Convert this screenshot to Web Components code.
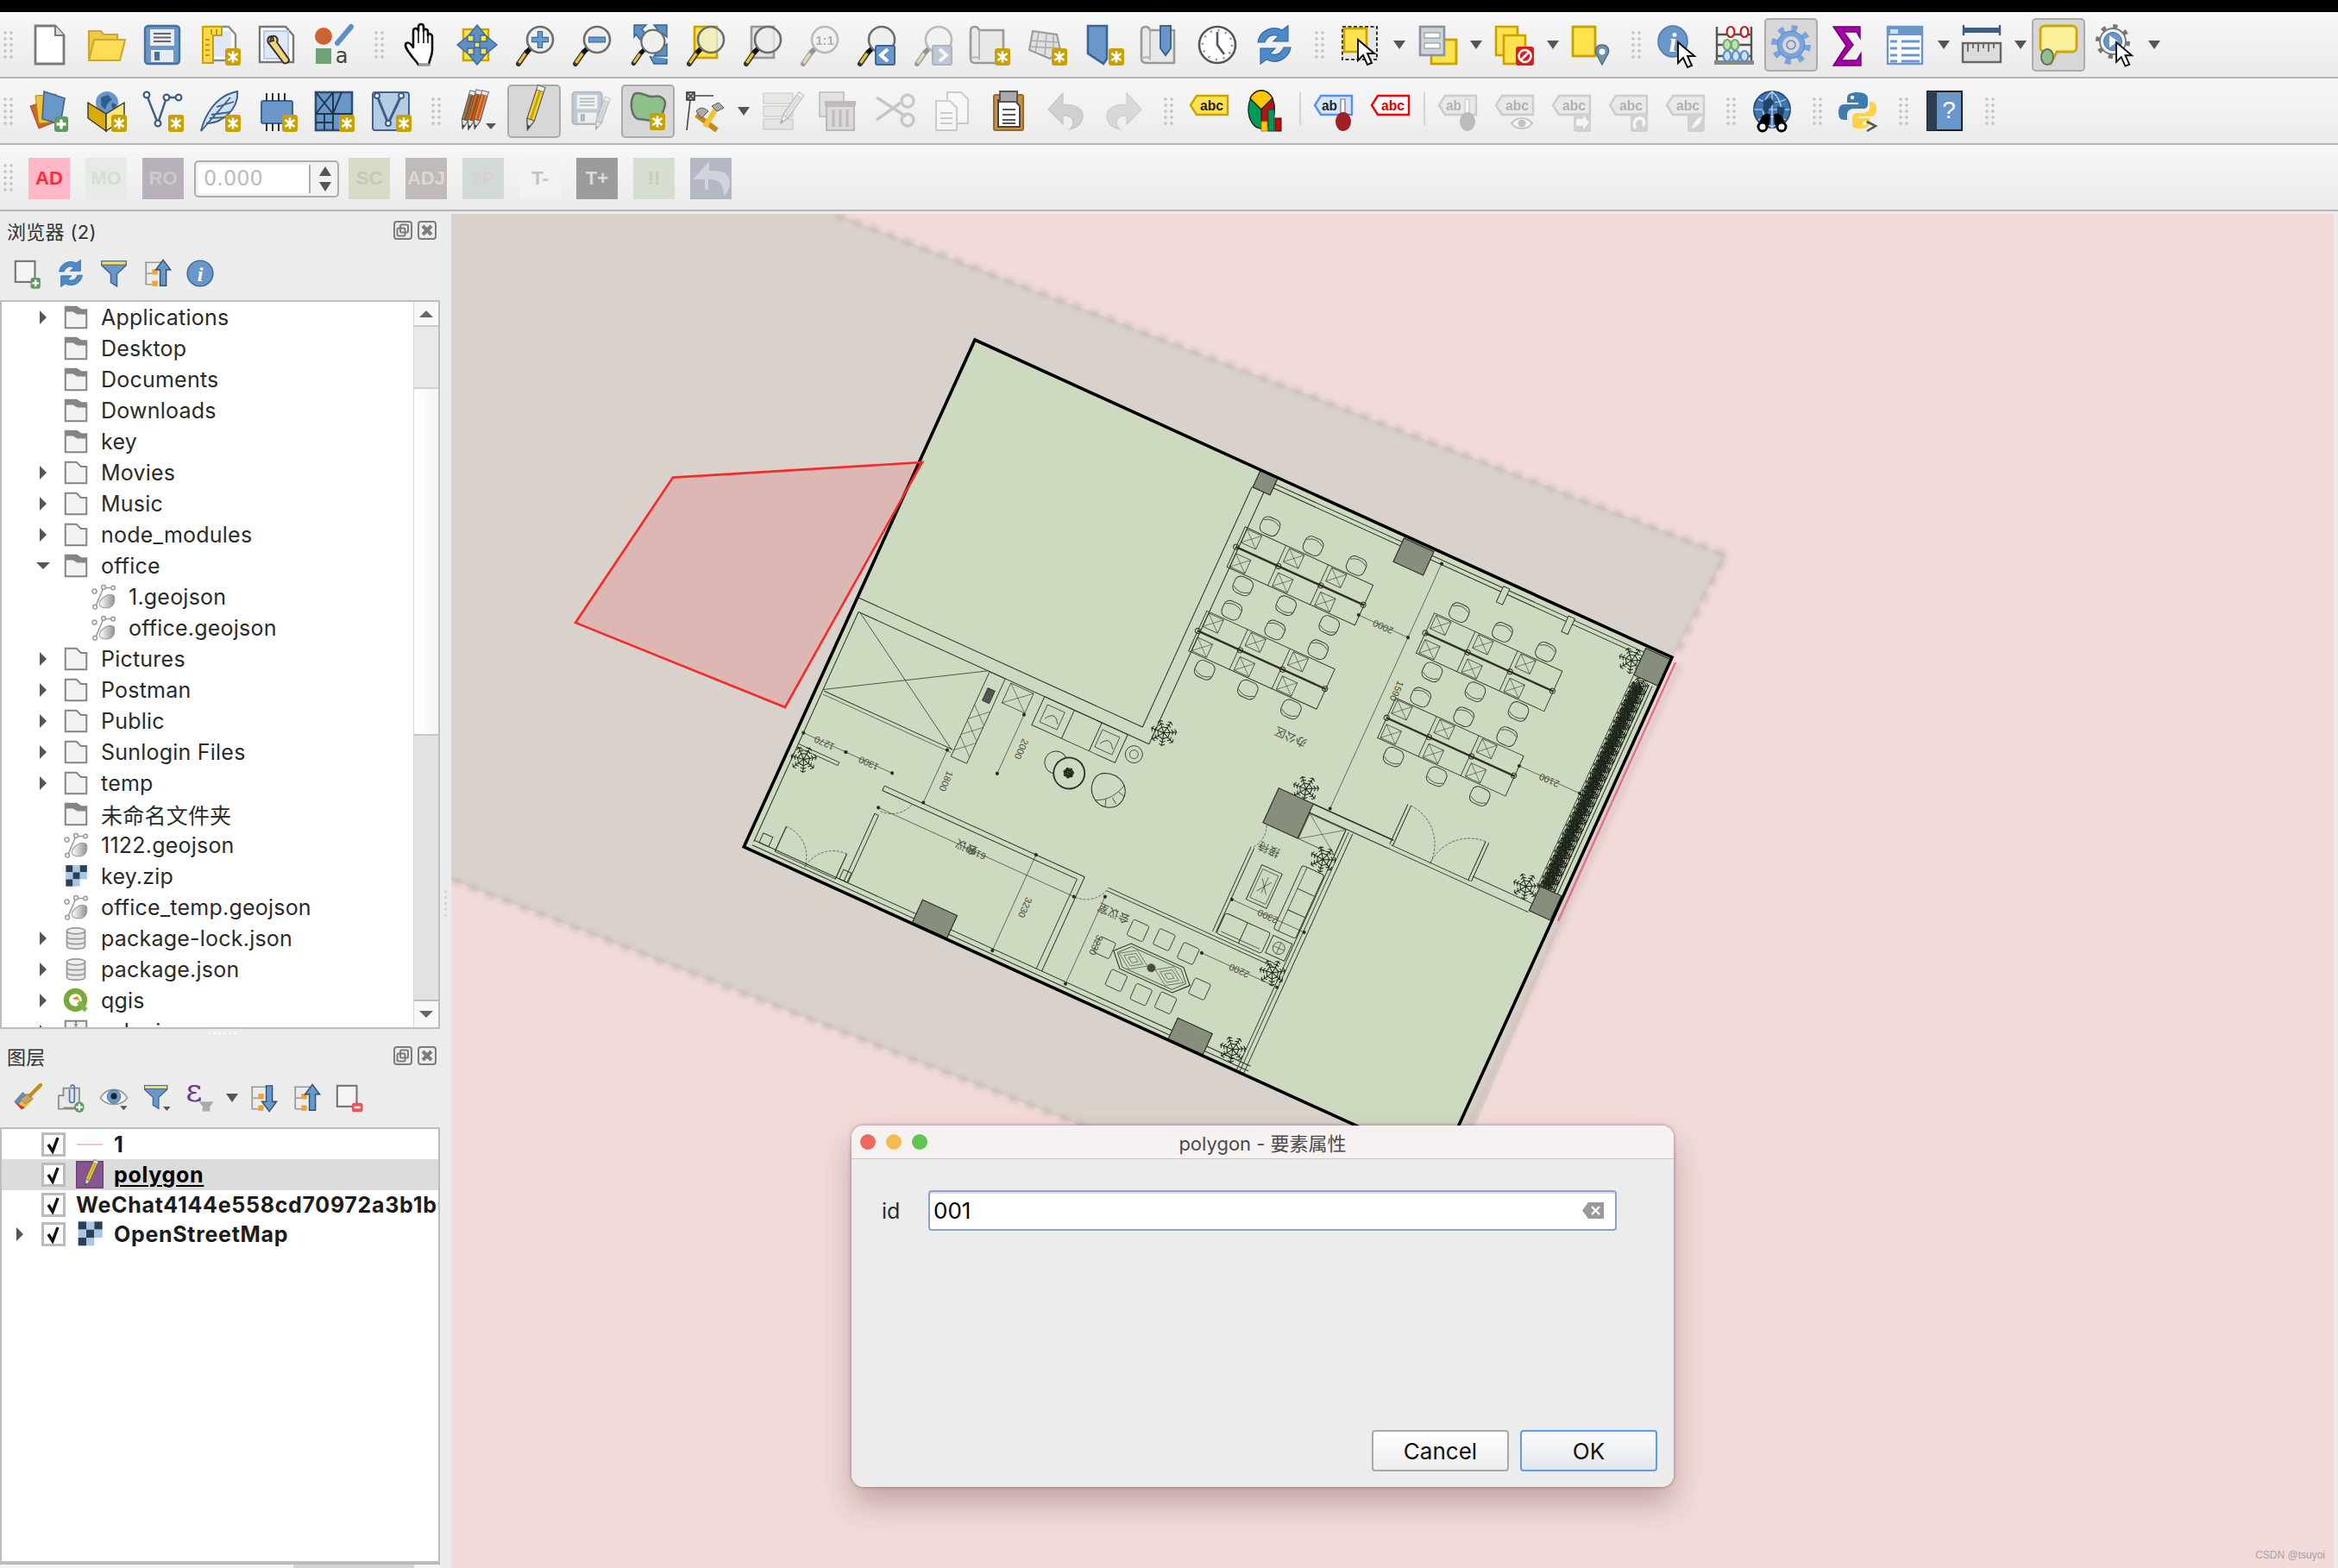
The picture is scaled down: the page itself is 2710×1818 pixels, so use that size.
<!DOCTYPE html>
<html lang="zh">
<head>
<meta charset="utf-8">
<title>QGIS</title>
<style>
	html, body { margin: 0; padding: 0; background: #ececec; }
	body { width: 2710px; height: 1818px; overflow: hidden; font-family: Inter, "Noto Sans CJK SC", sans-serif; color: #222; }
</style>
</head>
<body>
<qgis-app></qgis-app>

<script>
// Icon library. Every icon is drawn in a 48x48 box.
const star = (x = 30, y = 28) => `<g transform="translate(${x} ${y})"><rect width="18" height="20" rx="3" fill="#c9a200"/><path d="M9 3.5v13M3.5 6l11 8M14.5 6l-11 8" stroke="#fff" stroke-width="2.6"/></g>`;
const plus = (x, y, r = 3) => `<g transform="translate(${x} ${y})"><rect width="16" height="18" rx="${r}" fill="#5f9a5f"/><path d="M8 3.5v11M2.5 9h11" stroke="#fff" stroke-width="3.4"/></g>`;
const lens = (fill = '#eef0ee') => `<path d="M6 46 15 33" stroke="#333" stroke-width="6" stroke-linecap="round"/><path d="M6.5 45 14 34" stroke="#f0c02c" stroke-width="3.2"/><path d="M18 26l4 4-5 5-4-4z" fill="#111"/><circle cx="31" cy="18" r="15" fill="${fill}" stroke="#6e6e6e" stroke-width="2.6"/>`;
const cursor = (x, y, s = 1) => `<path transform="translate(${x} ${y}) scale(${s})" d="M0 0v24l6-6 5 11 5-2-5-11h8z" fill="#fff" stroke="#111" stroke-width="2"/>`;
const label = (fill, stroke, txt, col = '#222', y = 6) => `<path d="M9 ${y}h36v22H9L2 ${y + 11}z" fill="${fill}" stroke="${stroke}" stroke-width="2.4"/><text x="${txt.length < 3 ? 10 : 13}" y="${y + 17}" font-family="Liberation Sans" font-weight="700" font-size="17" textLength="${txt.length * 9}" lengthAdjust="spacingAndGlyphs" fill="${col}">${txt}</text>`;
const scroll = `<path d="M7 3C3 3 2 5 2 8v32c0 3 2 5 5 5h33V7H12C11 4 10 3 7 3z" fill="#e8e8e8" stroke="#9a9a9a" stroke-width="2.6"/><path d="M12 7v33c-2-2-6-2-10 0" fill="none" stroke="#b4b4b4" stroke-width="2"/>`;
const pencil = (x, y, r, c1, c2, s = 1) => `<g transform="translate(${x} ${y}) rotate(${r}) scale(${s})"><path d="M-5-32H5V14L0 28-5 14z" fill="${c1}" stroke="#555" stroke-width="1.4"/><path d="M0-32V14" stroke="${c2}" stroke-width="3.4"/><path d="M-5 14H5L0 28z" fill="#ddd" stroke="#555" stroke-width="1.2"/><path d="M-2 22H2L0 28z" fill="#444"/><path d="M-5-32H5V-26H-5z" fill="#eee" stroke="#777"/></g>`;
const floppy = `<rect x="3" y="2" width="40" height="44" rx="4" fill="#6a97c9" stroke="#46709f" stroke-width="2.4"/><rect x="9" y="6" width="28" height="19" fill="#e8ecf0"/><path d="M13 11h20M13 15.5h20M13 20h20" stroke="#666" stroke-width="2"/><rect x="10" y="30" width="26" height="14" fill="#e8ecf0"/><rect x="14" y="32" width="6" height="10" fill="#46709f"/>`;
const blueArrows = `<g fill="#5c8fc4" stroke="#3a6a9c" stroke-width="1.4"><path d="M24 1l10 12h-6v8h-8v-8h-6z"/><path d="M24 47L14 35h6v-8h8v8h6z"/><path d="M1 24l12-10v6h8v8h-8v6z"/><path d="M47 24L35 34v-6h-8v-8h8v-6z"/></g>`;
const refresh = `<g fill="#4f8ac8" stroke="#2f69a6" stroke-width="1.2"><path d="M5 21C7 8 21 1 33 7l7-5v18H23l6-6c-6-3-13-1-16 7z"/><path d="M43 27C41 40 27 47 15 41l-7 5V28h17l-6 6c6 3 13 1 16-7z"/></g>`;
const funnel = `<path d="M4 4h40v7L29 25v20l-10-6V25L4 11z" fill="#6a97c9" stroke="#3d6590" stroke-width="2"/><path d="M4 4h40v6H4z" fill="#ffe04a" stroke="#3d6590" stroke-width="1.4"/>`;
const orgTree = `<path d="M4 6h30M6 6v36h10M6 24h10" stroke="#999" stroke-width="2.4" fill="none"/><rect x="16" y="17" width="9" height="9" fill="#f2a32b"/><rect x="16" y="36" width="9" height="9" fill="#f2a32b"/>`;
const drop = (x = 36, y = 38) => `<path d="M${x} ${y}h12l-6 7z" fill="#555"/>`;
const globe = `<circle cx="24" cy="22" r="21" fill="#3f76ad" stroke="#294f78" stroke-width="2"/><path d="M24 1v42M3 22h42M8 10c10 5 22 5 32 0M8 34c10-5 22-5 32 0M24 1c-14 12-14 30 0 42M24 1c14 12 14 30 0 42" stroke="#cfe0f0" stroke-width="1.2" fill="none"/><path d="M14 12l8-4 5 6-6 6-3 8-5-6zM30 18l9 2-3 12-6-5z" fill="#20456c"/>`;

const ICONS = {
	new: `<path d="M8 2h23l10 11v33H8z" fill="#fff" stroke="#7a7a7a" stroke-width="2.8"/><path d="M31 2v11h10" fill="#ddd" stroke="#7a7a7a" stroke-width="2"/>`,
	open: `<path d="M4 40V8h14l3 4h16v6" fill="#f3c93f" stroke="#c9a83a" stroke-width="2.2"/><path d="M4 42l6-24h36l-6 24z" fill="#ffdc55" stroke="#c9a83a" stroke-width="2.2"/>`,
	save: floppy,
	newprint: `<path d="M8 3h26l8 9v30H8z" fill="#fff" stroke="#8a8a8a" stroke-width="2.4"/><rect x="13" y="8" width="24" height="30" fill="#dfe8f7"/><path d="M4 3h22v10H16v32H4z" fill="#ffd84d" stroke="#c9a200" stroke-width="2"/><path d="M7 18h5M7 24h5M7 30h5M7 36h5M14 6v6M20 6v6" stroke="#a88a00" stroke-width="1.6"/>${star()}`,
	layout: `<path d="M4 3h30l9 10v31H4z" fill="#fff" stroke="#777" stroke-width="2.4"/><rect x="9" y="8" width="28" height="32" fill="#e0e8f8" stroke="#b8c8e8" stroke-width="2"/><path d="M18 14c-5 0-6 6-3 9l16 21c2 3 7 1 7-3L24 21c2-4-1-8-5-7l1 5-4 1z" fill="#f2d675" stroke="#333" stroke-width="2"/>`,
	style: `<circle cx="12" cy="14" r="10" fill="#cc6330"/><path d="M28 22L44 3" stroke="#5c8fc4" stroke-width="6" stroke-linecap="round"/><rect x="3" y="28" width="18" height="18" fill="#6fa274"/><text x="33" y="45" font-family="DejaVu Sans" font-size="24" fill="#444" text-anchor="middle">a</text>`,
	hand: `<path d="M22 47c-3-5-7-8-10-13-3-4-7-9-4-12 3-2 6 2 8 5V8c0-4 5-4 6 0V3c0-4 6-4 6 0v5c0-3 5-3 5 1v4c1-3 5-2 5 2v15c0 7-3 10-4 17z" fill="#fff" stroke="#111" stroke-width="2.6" stroke-linejoin="round"/><path d="M22 8v14M28 8v14M33 12v10" stroke="#111" stroke-width="1.6"/><path d="M22 47h14" stroke="#999" stroke-width="3"/>`,
	panto: `<rect x="8" y="6" width="29" height="36" fill="#ffe24d" stroke="#c9a200" stroke-width="2.4"/>${blueArrows}`,
	zoomin: `${lens()}<path d="M31 8v20M21 18h20" stroke="#3a6a9c" stroke-width="6.4"/><path d="M31 9v18M22 18h18" stroke="#6a9bd0" stroke-width="4"/>`,
	zoomout: `${lens()}<path d="M21 18h20" stroke="#3a6a9c" stroke-width="7"/><path d="M22 18h18" stroke="#6a9bd0" stroke-width="4.4"/>`,
	zoomfull: `<g fill="#5c8fc4" stroke="#34618f" stroke-width="1.4"><path d="M8 1h14l-5 5 6 7-7 6-6-7-2 3zM46 1v14l-5-4-6 7-6-6 6-6-4-5zM46 37V23l-5 4-6-7-6 6 6 6-4 5zM26 37l5 9h15v-6"/></g><g transform="translate(2 4) scale(.9)">${lens('#eef0ee')}</g>`,
	zoomsel: `<rect x="12" y="3" width="26" height="36" fill="#ffe24d" stroke="#c9a200" stroke-width="2.6"/>${lens('rgba(238,240,225,.75)')}`,
	zoomlayer: `<rect x="12" y="3" width="26" height="36" fill="#e2e2e2" stroke="#9a9a9a" stroke-width="2.6"/>${lens('rgba(238,240,238,.75)')}`,
	zoom11: `${lens()}<text x="31" y="24" font-family="Liberation Sans" font-weight="700" font-size="15" text-anchor="middle" fill="#555">1:1</text>`,
	zoomlast: `${lens()}<rect x="24" y="25" width="22" height="22" rx="2" fill="#6a97c9" stroke="#3d6590" stroke-width="2"/><path d="M38 29l-8 7 8 7" fill="none" stroke="#fff" stroke-width="4"/>`,
	zoomnext: `${lens()}<rect x="24" y="25" width="22" height="22" rx="2" fill="#6a97c9" stroke="#3d6590" stroke-width="2"/><path d="M32 29l8 7-8 7" fill="none" stroke="#fff" stroke-width="4"/>`,
	newmap: `${scroll}${star()}`,
	new3d: `<path d="M8 8l28 4 4 18-12 10L4 30z" fill="#e0e0e0" stroke="#9a9a9a" stroke-width="2"/><path d="M15 9l-4 24M24 10l-2 26M32 11v24M6 19l32 2M5 26l34 2" stroke="#aaa" stroke-width="1.4" fill="none"/>${star()}`,
	newbm: `<path d="M6 2h22v38l-4 6-18-12z" fill="#6a97c9" stroke="#3d6590" stroke-width="2.6"/>${star()}`,
	showbm: `${scroll}<path d="M24 2h12v26l-6 8-6-8z" fill="#6a97c9" stroke="#3d6590" stroke-width="2"/>`,
	clock: `<circle cx="24" cy="24" r="21" fill="#fff" stroke="#555" stroke-width="2.6"/><path d="M24 9v15l8 11" fill="none" stroke="#555" stroke-width="2.6"/><circle cx="24" cy="24" r="17" fill="none" stroke="#6a97c9" stroke-width="2.6" stroke-dasharray="2 6.9"/>`,
	refresh,
	select: `<rect x="3" y="3" width="40" height="38" fill="#e6e6e6" stroke="#333" stroke-width="2" stroke-dasharray="4 2.5"/><rect x="5" y="5" width="26" height="27" fill="#ffe24d" stroke="#c9a200" stroke-width="2.6"/>${cursor(21, 18, 1)}`,
	selval: `<rect x="17" y="18" width="29" height="28" fill="#ffe24d" stroke="#c9a200" stroke-width="2.8"/><rect x="4" y="3" width="28" height="33" fill="#ccd4dc" stroke="#8a949e" stroke-width="2.6"/><rect x="9" y="10" width="18" height="6" fill="#fff" stroke="#888"/><rect x="9" y="22" width="18" height="6" fill="#fff" stroke="#888"/>`,
	desel: `<rect x="3" y="3" width="25" height="33" fill="#ffe24d" stroke="#c9a200" stroke-width="2.6"/><rect x="12" y="13" width="25" height="33" fill="#ffe24d" stroke="#c9a200" stroke-width="2.6"/><rect x="26" y="26" width="21" height="22" rx="3" fill="#d81f1f"/><circle cx="36.5" cy="37" r="7" fill="none" stroke="#fff" stroke-width="2.6"/><path d="M31.5 42l10-10" stroke="#fff" stroke-width="2.6"/>`,
	selloc: `<rect x="3" y="3" width="26" height="34" fill="#ffe24d" stroke="#c9a200" stroke-width="2.8"/><path d="M37 24c-6 0-9 5-7 10l7 13 7-13c2-5-1-10-7-10z" fill="#7391a8" stroke="#506a80" stroke-width="1.4"/><circle cx="37" cy="32" r="3.4" fill="#fff"/>`,
	identify: `<ellipse cx="19" cy="20" rx="17" ry="18" fill="#6a97c9" stroke="#4f7aa8" stroke-width="1.6"/><text x="19" y="32" font-family="Liberation Serif" font-style="italic" font-weight="700" font-size="32" fill="#fff" text-anchor="middle">i</text>${cursor(25, 21, 1)}`,
	abacus: `<path d="M4 3v41M44 3v41" stroke="#555" stroke-width="2.4"/><path d="M4 12h40M4 24h40M4 37h40" stroke="#555" stroke-width="2.4"/><rect x="1" y="42" width="46" height="5" fill="#888"/><g fill="#fff" stroke-width="2.2"><g stroke="#c41f1f"><ellipse cx="20" cy="9" rx="4.4" ry="6"/><ellipse cx="36" cy="9" rx="4.4" ry="6"/></g><g stroke="#6fae6f" fill="#bfe0b0"><ellipse cx="16" cy="24" rx="4.4" ry="6"/><ellipse cx="25" cy="24" rx="4.4" ry="6"/></g><g stroke="#5c8fc4" fill="#d0e2f4"><ellipse cx="16" cy="37" rx="4.4" ry="6"/><ellipse cx="26" cy="37" rx="4.4" ry="6"/><ellipse cx="36" cy="37" rx="4.4" ry="6"/></g></g>`,
	gear: `<circle cx="24" cy="24" r="19" fill="none" stroke="#79a3dc" stroke-width="8" stroke-dasharray="6.5 8.4"/><circle cx="24" cy="24" r="13" fill="none" stroke="#79a3dc" stroke-width="6"/><circle cx="24" cy="24" r="5" fill="none" stroke="#5c88c4" stroke-width="1.4"/><circle cx="24" cy="24" r="16" fill="none" stroke="#5c88c4" stroke-width="1"/>`,
	sigma: `<path d="M7 3h31v13l-4-7H19l11 15-14 18h18l5-8v14H7l15-23z" fill="#a800a8" stroke="#700070" stroke-width="1.4"/>`,
	table: `<rect x="4" y="3" width="40" height="43" fill="#fff" stroke="#6a97c9" stroke-width="2.4"/><rect x="4" y="3" width="40" height="10" fill="#6a97c9"/><rect x="7" y="6" width="9" height="5" fill="#cfe0f0"/><path d="M7 20h8M20 20h21M7 28h8M20 28h21M7 36h8M20 36h21M7 43h8M20 43h21" stroke="#6a97c9" stroke-width="3"/>`,
	measure: `<path d="M3 7h42" stroke="#3f5f82" stroke-width="6"/><path d="M3 1v12M45 1v12" stroke="#3f5f82" stroke-width="2.4"/><rect x="2" y="22" width="44" height="22" fill="#ddd" stroke="#666" stroke-width="2.4"/><path d="M8 22v10M14 22v6M20 22v10M26 22v6M32 22v10M38 22v6" stroke="#666" stroke-width="1.8"/>`,
	tip: `<path d="M8 2h32c3 0 5 2 5 5v20c0 3-2 5-5 5H22l-6 12-1-12H8c-3 0-5-2-5-5V7c0-3 2-5 5-5z" fill="#fdf09c" stroke="#cda800" stroke-width="2.8"/><ellipse cx="11" cy="38" rx="7" ry="9" fill="#8fc08a" stroke="#666" stroke-width="1.8"/>`,
	action: `<circle cx="21" cy="20" r="17" fill="none" stroke="#777" stroke-width="6" stroke-dasharray="5 8.3"/><circle cx="21" cy="20" r="15" fill="#f4f4f4" stroke="#777" stroke-width="1.8"/><circle cx="21" cy="20" r="10.5" fill="#6a97c9" stroke="#4a6f9c"/><path d="M17 13l10 7-10 7z" fill="#fff"/>${cursor(25, 21, .95)}`,

	dsm: `<path d="M2 18l24-8 6 26-20 8z" fill="#cc6330" stroke="#a34c20"/><path d="M8 6l24-2 2 32-22 2z" fill="#f2c230" stroke="#b89000"/><path d="M18 1l24 8-5 30-21-6z" fill="#6a97c9" stroke="#3d6590" stroke-width="1.6"/>${plus(30, 30)}`,
	gpkg: `<circle cx="25" cy="14" r="13" fill="#6a97c9"/><path d="M18 8l8-3 5 5-6 6-2 6-5-5zM31 14l5 2-2 6-4-3z" fill="#2f5f8f"/><path d="M3 14l21 13v20L3 32z" fill="#d8ac00" stroke="#333" stroke-width="1.4"/><path d="M45 14L24 27v20l21-15z" fill="#ffe77a" stroke="#333" stroke-width="1.4"/>${star()}`,
	vnew: `<path d="M5 5l13 33L28 8h12" fill="none" stroke="#3f5f82" stroke-width="2.4"/><g fill="#fff" stroke="#3f5f82" stroke-width="2.2"><circle cx="5" cy="5" r="3.4"/><circle cx="18" cy="38" r="3.4"/><circle cx="28" cy="8" r="3.4"/><circle cx="42" cy="8" r="3.4"/></g>${star()}`,
	feather: `<path d="M2 47C6 30 18 6 44 1 46 20 28 38 8 38" fill="#cfe0f4" stroke="#3f5f82" stroke-width="2"/><path d="M2 47L36 8M14 28l22-3M12 32l20-1M20 19l20-6" stroke="#3f5f82" stroke-width="1.8" fill="none"/>${star()}`,
	chip: `<rect x="6" y="12" width="36" height="26" rx="2" fill="#6a97c9" stroke="#3d6590" stroke-width="2"/><path d="M12 3v9M19 3v9M26 3v9M33 3v9M12 38v9M19 38v9M26 38v9" stroke="#333" stroke-width="2"/>${star()}`,
	mesh: `<rect x="3" y="2" width="42" height="44" fill="#6a97c9" stroke="#2f4f72" stroke-width="2.6"/><path d="M3 27h42M23 2v44M3 2l20 25M23 2L3 27M23 27l10-25M3 37h20M13 27v19" stroke="#1f3650" stroke-width="2"/>${star()}`,
	vbox: `<rect x="3" y="2" width="42" height="44" rx="3" fill="#b6cce4" stroke="#3d6590" stroke-width="2"/><path d="M8 6l13 32L36 6" fill="none" stroke="#3f5f82" stroke-width="3"/><g fill="#fff" stroke="#3f5f82" stroke-width="2"><circle cx="8" cy="6" r="3"/><circle cx="21" cy="38" r="3"/><circle cx="36" cy="6" r="3"/></g>${star()}`,
	pencils: `${pencil(13, 24, 16, '#a87a4a', '#7a5530', .75)}${pencil(20, 24, 16, '#d46a26', '#a84a10', .78)}${pencil(27, 24, 16, '#e88a3a', '#cc5a16', .75)}<path d="M34 38h12l-6 7z" fill="#555"/>`,
	pencil: `${pencil(24, 22, 18, '#f0d840', '#c8a800', .88)}`,
	saveedit: `<g transform="scale(.85)">${floppy}</g>${pencil(36, 28, 20, '#bbb', '#aaa', .65)}`,
	polyadd: `<path d="M8 4c8-4 14 4 22 3 8-2 14 2 14 8 0 7-5 10-3 17 1 6-4 8-10 5-6-4-12-3-18-4C5 31 2 14 8 4z" fill="#8dc08a" stroke="#6a6a6a" stroke-width="2.4"/>${star(26, 26)}`,
	vertex: `<rect x="3" y="2" width="9" height="9" fill="#bbb" stroke="#333" stroke-width="1.6"/><path d="M3 2l9 9M12 2l-9 9M12 6h22M7 11L3 46" stroke="#444" stroke-width="1.6"/><path d="M14 28l24 18" stroke="#c98a10" stroke-width="6"/><path d="M40 16L24 42" stroke="#f2c230" stroke-width="6"/><path d="M14 24c4-6 10-4 14 0l-8 8z" fill="#aaa" stroke="#555"/><path d="M32 18l8-4 6 6-8 4z" fill="#aaa" stroke="#555"/>`,
	multi: `<rect x="3" y="3" width="34" height="12" fill="#d8d8c8" stroke="#888"/><rect x="3" y="18" width="34" height="12" fill="#d8d8c8" stroke="#888"/><rect x="3" y="33" width="34" height="12" fill="#d8d8c8" stroke="#888"/>${pencil(34, 22, 35, '#ddd', '#bbb', .7)}`,
	trash: `<rect x="2" y="2" width="28" height="28" fill="#ccc" stroke="#888" stroke-width="2"/><path d="M8 12h36v6H8z" fill="#8a6a6a"/><path d="M10 18h32v28H10z" fill="#c8b8b8" stroke="#8a6a6a" stroke-width="2"/><path d="M18 22v20M26 22v20M34 22v20" stroke="#8a6a6a" stroke-width="3"/>`,
	cut: `<path d="M2 8l34 22M2 34L30 14" stroke="#888" stroke-width="3.4"/><circle cx="38" cy="12" r="7" fill="none" stroke="#a88" stroke-width="3.4"/><circle cx="38" cy="34" r="7" fill="none" stroke="#a88" stroke-width="3.4"/>`,
	copy: `<path d="M18 2h16l8 8v28H18z" fill="#fff" stroke="#999" stroke-width="2"/><path d="M5 12h16l8 8v26H5z" fill="#fff" stroke="#999" stroke-width="2"/><path d="M10 26h14M10 32h14M10 38h14" stroke="#999" stroke-width="2"/>`,
	paste: `<rect x="6" y="5" width="34" height="41" rx="2" fill="#c98f45" stroke="#9a6a2a" stroke-width="2"/><path d="M11 11h19l6 7v24H11z" fill="#fff" stroke="#444" stroke-width="2"/><rect x="13" y="1" width="20" height="12" fill="#aaa" stroke="#555" stroke-width="2"/><path d="M16 22h15M16 28h15M16 34h15M16 38h15" stroke="#555" stroke-width="2.2"/>`,
	undo: `<path d="M20 3L3 22l17 17v-10c8 0 12 3 12 8 0 3-2 6-4 8 9-2 16-8 15-17-1-8-10-12-23-12z" fill="#aaa69e" stroke="#888" stroke-width="1.2"/>`,
	redo: `<path d="M28 3l17 19-17 17v-10c-8 0-12 3-12 8 0 3 2 6 4 8-9-2-16-8-15-17C6 20 15 16 28 16z" fill="#b4bcb4" stroke="#999" stroke-width="1.2"/>`,
	abc: label('#ffe24d', '#c9a200', 'abc'),
	pie: `<ellipse cx="18" cy="22" rx="15" ry="22" fill="#009a55" stroke="#222" stroke-width="1.4"/><path d="M18 22L5 9c3-6 8-9 13-9s10 3 13 9z" fill="#ffc700" stroke="#222" stroke-width="1.4"/><path d="M18 22L31 9c3 8 3 18-1 26-3 6-8 9-12 9z" fill="#b81212" stroke="#222" stroke-width="1.4"/><rect x="18" y="36" width="7" height="11" fill="#ffc700" stroke="#b88a00"/><rect x="26" y="22" width="7" height="25" fill="#009a55" stroke="#045"/><rect x="34" y="32" width="7" height="15" fill="#b81212" stroke="#500"/>`,
	abpin: `${label('#d6e6fa', '#4f95ec', 'ab', '#222')}<path d="M32 10h5v22h-5z" fill="#fff" stroke="#777" stroke-width="1.2"/><ellipse cx="35" cy="36" rx="9" ry="11" fill="#a01f24"/>`,
	abcred: label('#fff', '#f00000', 'abc', '#e00000'),
	abpingrey: `${label('#ddd', '#999', 'ab', '#555')}<path d="M32 10h5v22h-5z" fill="#fff" stroke="#777"/><ellipse cx="35" cy="36" rx="9" ry="11" fill="#777"/>`,
	abceye: `${label('#ddd', '#999', 'abc', '#555')}<path d="M20 38c6-8 18-8 24 0-6 8-18 8-24 0z" fill="#fff" stroke="#777" stroke-width="1.6"/><circle cx="32" cy="38" r="4.6" fill="#888"/>`,
	abcmove: `${label('#ddd', '#999', 'abc', '#555')}<rect x="26" y="26" width="20" height="22" rx="3" fill="#aaa"/><path d="M29 33h8v-4l7 8-7 8v-4h-8z" fill="#fff"/>`,
	abcrot: `${label('#ddd', '#999', 'abc', '#555')}<rect x="26" y="26" width="20" height="22" rx="3" fill="#aaa"/><path d="M32 44c-4-6 0-13 6-12 4 1 5 6 2 9" fill="none" stroke="#fff" stroke-width="3.4"/>`,
	abcfea: `${label('#ddd', '#999', 'abc', '#555')}<rect x="26" y="26" width="20" height="22" rx="3" fill="#aaa"/><path d="M30 45c3-8 8-14 13-15-1 7-5 12-10 13z" fill="#fff"/>`,
	globebin: `${globe}<path d="M11 32c2-4 7-7 11-4l-1 12H9zM37 32c-2-4-7-7-11-4l1 12h12z" fill="#000"/><circle cx="13" cy="42" r="5" fill="#fff" stroke="#000" stroke-width="3"/><circle cx="35" cy="42" r="5" fill="#fff" stroke="#000" stroke-width="3"/>`,
	python: `<path d="M23 2c-8 0-12 2-12 7v5h13v2H7c-4 0-6 4-6 9 0 6 2 9 6 9h4v-6c0-4 3-7 8-7h11c3 0 5-2 5-5V9c0-4-4-7-12-7z" fill="#3f7cad"/><circle cx="17" cy="8" r="2.2" fill="#fff"/><path d="M25 44c8 0 12-2 12-7v-5H24v-2h15c4 0 6-4 6-9s-2-8-6-8h-2v6c0 4-3 7-8 7H22c-3 0-5 2-5 5v7c0 4 0 6 8 6z" fill="#ffd343"/><circle cx="31" cy="38" r="2.2" fill="#fff"/><path d="M34 36l10 5-10 6" fill="none" stroke="#555" stroke-width="2.6"/>`,
	help: `<rect x="4" y="1" width="40" height="45" fill="#6a97c9" stroke="#222" stroke-width="2"/><rect x="4" y="1" width="11" height="45" fill="#2c3e50"/><text x="29" y="32" font-family="Liberation Sans" font-size="28" fill="#fff" text-anchor="middle">?</text>`,
	back: `<path d="M22 4L3 25l14 0v12h4V25h4c9 0 14 7 14 19 6-6 8-13 6-20-2-6-7-9-19-9h-4z" fill="#d0d4dc"/>`,

	// dock panel toolbars
	addnew: `<rect x="4" y="4" width="32" height="34" fill="#f4f4f4" stroke="#777" stroke-width="3"/>${plus(29, 31)}`,
	refreshs: refresh,
	filter: funnel,
	collapse: `${orgTree}<path d="M34 2L22 18h7v26h10V18h7z" fill="#6a97c9" stroke="#2f4f72" stroke-width="2"/>`,
	expand: `${orgTree}<path d="M34 46L22 30h7V4h10v26h7z" fill="#6a97c9" stroke="#2f4f72" stroke-width="2"/>`,
	info: `<circle cx="24" cy="24" r="21" fill="#6a97c9" stroke="#3d6590" stroke-width="2"/><text x="24" y="37" font-family="Liberation Serif" font-style="italic" font-weight="700" font-size="34" fill="#fff" text-anchor="middle">i</text>`,
	brush: `<path d="M2 30L16 14l16 14-12 12z" fill="#f2c230"/><path d="M2 30L16 14l6 5L8 36z" fill="#5c8fc4"/><path d="M2 30l18 10-6 3z" fill="#d83030"/><path d="M20 34l-8-8 12-9 9 8z" fill="#c8a06a" stroke="#8a6a3a"/><path d="M28 20L45 3" stroke="#c98a10" stroke-width="6" stroke-linecap="round"/>`,
	addgroup: `<path d="M4 20h8V8h26v32H12M4 20v22h28" fill="#e4e4e4" stroke="#888" stroke-width="2.4"/><path d="M22 10v18c0 5 8 5 8 0V6c0-4-6-4-6 0" fill="none" stroke="#4f7aa8" stroke-width="2.4"/>${plus(30, 30, 8)}`,
	eye: `<path d="M2 24C12 6 36 6 46 24 36 38 12 38 2 24z" fill="#f4f4f4" stroke="#999" stroke-width="2.4"/><circle cx="24" cy="22" r="11" fill="#6a97c9" stroke="#3d6590"/><circle cx="24" cy="21" r="5" fill="#222"/>${drop(34, 37)}`,
	filterd: `<g transform="scale(.92)">${funnel}</g>${drop(34, 38)}`,
	epsilon: `<text x="14" y="30" font-family="DejaVu Serif" font-size="52" fill="#6a3a8a" text-anchor="middle">ε</text><path d="M22 30h24l-6 8v8h-12v-8z" fill="#aaa"/>`,
	remove: `<rect x="4" y="4" width="32" height="34" fill="#f4f4f4" stroke="#777" stroke-width="3"/><rect x="28" y="32" width="18" height="15" rx="4" fill="#f0505a"/><path d="M32 39.5h10" stroke="#fff" stroke-width="3.6"/>`,

	// tree icons, also in the 48 box
	folder: `<path d="M3 3h22l9 9h11v33H3z" fill="#f2f2f2" stroke="#858585" stroke-width="3.4"/>`,
	folderfav: `<path d="M3 3h22l10 6h10v36H3z" fill="#f2f2f2" stroke="#858585" stroke-width="3.4"/><path d="M3 2h20l10 7h13v9H27l-9-5H3z" fill="#858585"/>`,
	geo: `<path d="M8 43L24 6h18" fill="none" stroke="#999" stroke-width="2.6"/><g fill="#fff" stroke="#999" stroke-width="2.6"><circle cx="6" cy="13" r="4.4"/><circle cx="24" cy="5" r="4"/><circle cx="43" cy="6" r="4"/><circle cx="7" cy="44" r="4"/></g><path d="M45 22c3 11-1 23-13 24-13 1-18-5-15-13 4-8 19-18 28-11z" fill="url(#geog)" stroke="#999" stroke-width="1.8"/><defs><linearGradient id="geog" x1="0" x2="1"><stop offset="0" stop-color="#fff"/><stop offset="1" stop-color="#909090"/></linearGradient></defs>`,
	zip: `<rect x="4" y="2" width="14" height="14" fill="#2b3f58"/><rect x="18" y="2" width="14" height="14" fill="#a9c6e6"/><rect x="32" y="2" width="14" height="14" fill="#2b3f58"/><rect x="4" y="16" width="14" height="14" fill="#a9c6e6"/><rect x="18" y="16" width="14" height="14" fill="#2b3f58"/><rect x="32" y="16" width="14" height="14" fill="#a9c6e6"/><rect x="4" y="30" width="14" height="14" fill="#2b3f58"/><rect x="18" y="30" width="14" height="14" fill="#a9c6e6"/>`,
	db: `<path d="M6 9v30c0 8 36 8 36 0V9" fill="#e8e8e8" stroke="#999" stroke-width="3"/><ellipse cx="24" cy="9" rx="18" ry="6" fill="#eee" stroke="#999" stroke-width="3"/><path d="M6 20c0 7 36 7 36 0M6 30c0 7 36 7 36 0" fill="none" stroke="#999" stroke-width="3"/>`,
	qgis: `<circle cx="23" cy="23" r="18" fill="none" stroke="#7aa83a" stroke-width="11"/><path d="M16 20l11-4 6 9z" fill="#f2742a"/><path d="M24 22l5-3 3 6z" fill="#f2c230"/><path d="M26 30l6-6 15 16-6 7z" fill="#7ab846"/>`,
	sshzip: `<path d="M3 3h42v42H3z" fill="#f2f2f2" stroke="#858585" stroke-width="3.4"/><path d="M20 3h8v42h-8z" fill="#ccc"/><path d="M24 3v42" stroke="#555" stroke-width="3" stroke-dasharray="3 3"/>`,
	editsym: `<rect x="1" y="1" width="46" height="46" fill="#87558f" stroke="#6a3d72" stroke-width="2"/>${pencil(25, 23, 24, '#f0d840', '#c8a800', .8)}`,
	linesym: `<path d="M1 24h46" stroke="#f7c4cf" stroke-width="3"/>`,
};

const iconSvg = (name, size) => `<svg width="${size}" height="${size}" viewBox="0 0 48 48" style="overflow:visible;display:block">${ICONS[name] || ''}</svg>`;

class TopBand extends HTMLElement {
	constructor() {
		super();
		this.attachShadow({ mode: 'open' }).innerHTML = `<style>:host { display: block; height: 14px; background: #000; }</style>`;
	}
}

class ToolBar extends HTMLElement {
	constructor() {
		super();
		this.attachShadow({ mode: 'open' }).innerHTML = `
			<style>
				:host {
					display: flex; align-items: center; height: 75px; box-sizing: content-box;
					background: linear-gradient(#f7f7f7, #ebebeb);
					border-bottom: 2px solid #b6b6b6;
				}
			</style>
			<slot></slot>`;
	}
}

class ToolGrip extends HTMLElement {
	constructor() {
		super();
		this.attachShadow({ mode: 'open' }).innerHTML = `
			<style>
				:host { display: flex; justify-content: center; width: 34px; }
				:host([first]) { width: 24px; justify-content: flex-start; padding-left: 0; }
				i { display: block; width: 12px; height: 34px; margin-left: 3px;
					background: radial-gradient(circle at 3px 3px, #c4c4c4 1.5px, transparent 1.8px) 0 0 / 7px 7px; }
			</style><i></i>`;
	}
}

class ToolSep extends HTMLElement {
	constructor() {
		super();
		this.attachShadow({ mode: 'open' }).innerHTML = `
			<style>
				:host { display: flex; justify-content: center; width: 12px; }
				i { width: 2px; height: 38px; background: #d4d4d4; margin-top: -6px; }
			</style><i></i>`;
	}
}

class ToolDrop extends HTMLElement {
	constructor() {
		super();
		this.attachShadow({ mode: 'open' }).innerHTML = `
			<style>
				:host { display: flex; justify-content: center; width: 23px; }
				i { width: 0; height: 0; border: 7.5px solid transparent; border-top: 10px solid #555; border-bottom: 0; }
			</style><i></i>`;
	}
}

class ToolBtn extends HTMLElement {
	constructor() {
		super();
		const small = this.hasAttribute('small');
		this.attachShadow({ mode: 'open' }).innerHTML = `
			<style>
				:host { display: flex; align-items: center; justify-content: center; width: 66px; height: 62px; flex: none; box-sizing: border-box; }
				:host([small]) { width: 50px; height: 50px; }
				:host([active]) > .b { background: #d7d7d7; border-color: #ababab; }
				.b { display: flex; align-items: center; justify-content: center; width: 62px; height: 62px; box-sizing: border-box; border: 2px solid transparent; border-radius: 5px; }
				:host([small]) .b { width: 50px; height: 50px; }
				:host([off]) svg { opacity: .42; filter: saturate(.5); }
			</style>
			<div class="b">${iconSvg(this.getAttribute('icon'), small ? 34 : 48)}</div>`;
	}
}

// AD, MO, RO... the grey digitizing mode squares of the third bar
class ModeBtn extends HTMLElement {
	constructor() {
		super();
		this.attachShadow({ mode: 'open' }).innerHTML = `
			<style>
				:host { display: flex; justify-content: center; width: 66px; flex: none; margin-top: 3px; }
				div { display: flex; align-items: center; justify-content: center; width: 48px; height: 48px;
					font: 700 22px "Liberation Sans", sans-serif; background: var(--bg); color: var(--fg); }
			</style>
			<div><slot></slot></div>`;
	}
}

class SpinBox extends HTMLElement {
	constructor() {
		super();
		this.attachShadow({ mode: 'open' }).innerHTML = `
			<style>
				:host { display: flex; width: 168px; height: 43px; margin: 3px 2px 0 3px; box-sizing: border-box; flex: none;
					border: 2px solid #aeaeae; border-radius: 5px; background: #f2f2f2; }
				.v { flex: 1; margin: 3px 2px 3px 3px; background: #fff; color: #bdbdbd; padding-left: 6px;
					font: 24px/32px "DejaVu Sans", sans-serif; border-right: 2px solid #aeaeae; }
				.a { width: 29px; display: flex; flex-direction: column; align-items: center; justify-content: center; gap: 7px; }
				.a i { width: 0; height: 0; border: 7px solid transparent; }
				.u { border-bottom: 11px solid #555 !important; border-top: 0 !important; }
				.d { border-top: 11px solid #555 !important; border-bottom: 0 !important; }
			</style>
			<div class="v"><slot></slot></div>
			<div class="a"><i class="u"></i><i class="d"></i></div>`;
	}
}

class DockPanel extends HTMLElement {
	constructor() {
		super();
		this.attachShadow({ mode: 'open' }).innerHTML = `
			<style>
				:host { display: flex; flex-direction: column; width: 510px; overflow: hidden; }
				.title { display: flex; align-items: center; height: var(--title-h, 46px); padding: 0 4px 0 8px; font-size: 22px; letter-spacing: .3px; color: #333; flex: none; box-sizing: border-box; padding-bottom: 2px; }
				.title span { flex: 1; }
				.title svg { display: block; margin-left: 6px; }
				.bar { display: flex; align-items: center; height: var(--bar-h, 57px); padding: 0 0 var(--bar-pb, 6px) 7px; flex: none; box-sizing: border-box; }
				.frame { flex: 1; min-height: 0; display: flex; border: 2px solid #bdbdbd; background: #fff; position: relative; overflow: hidden; }
			</style>
			<div class="title">
				<span>${this.getAttribute('heading')}</span>
				<svg width="22" height="22" viewBox="0 0 22 22" fill="none" stroke="#7c7c7c" stroke-width="2"><rect x="1" y="1" width="20" height="20" rx="3"/><rect x="8" y="4.5" width="9" height="9" rx="1.5"/><rect x="4.5" y="8.5" width="9" height="9" rx="1.5"/></svg>
				<svg width="22" height="22" viewBox="0 0 22 22" fill="none" stroke="#7c7c7c" stroke-width="2"><rect x="1" y="1" width="20" height="20" rx="3"/><path d="M6 6l10 10M16 6L6 16" stroke-width="4"/></svg>
			</div>
			<div class="bar"><slot name="bar"></slot></div>
			<div class="frame"><slot></slot></div>`;
	}
}

class TreeView extends HTMLElement {
	constructor() {
		super();
		this.attachShadow({ mode: 'open' }).innerHTML = `
			<style>
				:host { display: block; flex: 1; min-width: 0; overflow: hidden; }
			</style><slot></slot>`;
	}
}

class TreeRow extends HTMLElement {
	constructor() {
		super();
		const arrow = this.getAttribute('arrow');
		const ind = +this.getAttribute('indent') || 0;
		let a = '';
		if (arrow === 'right') a = '<i style="border-width:8px 0 8px 8px;border-color:transparent transparent transparent #555"></i>';
		if (arrow === 'down') a = '<i style="border-width:8px 8px 0;border-color:#555 transparent transparent;margin-left:-4px"></i>';
		this.attachShadow({ mode: 'open' }).innerHTML = `
			<style>
				:host { display: flex; align-items: center; height: 36px; padding-left: ${ind}px; font-size: 25px; letter-spacing: .22px; color: #2b2b2b; white-space: nowrap; }
				.a { width: 72px; flex: none; padding-left: 44px; box-sizing: border-box; display: flex; }
				.a i { display: block; width: 0; height: 0; border-style: solid; }
				svg { flex: none; margin-right: 15px; }
			</style>
			<div class="a">${a}</div>${iconSvg(this.getAttribute('icon'), 28)}<span><slot></slot></span>`;
	}
}

class VScroll extends HTMLElement {
	constructor() {
		super();
		this.attachShadow({ mode: 'open' }).innerHTML = `
			<style>
				:host { display: flex; flex-direction: column; width: 28px; flex: none; height: 100%; border-left: 1px solid #d8d8d8; background: linear-gradient(90deg, #fff, #f4f4f4); }
				.btn { height: 27px; flex: none; display: flex; align-items: center; justify-content: center; border-bottom: 2px solid #ccc; background: #f8f8f8; }
				.btn.b { border-bottom: 0; border-top: 2px solid #bbb; height: 30px; }
				.up { width: 0; border: 8px solid transparent; border-top: 0; border-bottom: 8px solid #666; }
				.dn { width: 0; border: 8px solid transparent; border-bottom: 0; border-top: 8px solid #666; }
				.t1 { height: 70px; flex: none; background: #e9e9e9; border-bottom: 2px solid #d0d0d0; }
				.gap { height: 400px; flex: none; }
				.t2 { flex: 1; background: #e2e2e2; border-top: 2px solid #c8c8c8; }
			</style>
			<div class="btn"><div class="up"></div></div>
			<div class="t1"></div><div class="gap"></div><div class="t2"></div>
			<div class="btn b"><div class="dn"></div></div>`;
	}
}

class LayerRow extends HTMLElement {
	constructor() {
		super();
		const sym = this.getAttribute('symbol');
		const arrow = this.hasAttribute('arrow');
		this.attachShadow({ mode: 'open' }).innerHTML = `
			<style>
				:host { display: flex; align-items: center; height: var(--h, 35px); font-weight: 700; font-size: 25px; letter-spacing: .7px; color: #1c1c1c; white-space: nowrap; }
				:host([current]) { background: #dcdcdc; }
				:host([current]) span { text-decoration: underline; text-decoration-thickness: 2px; text-underline-offset: 3px; color: #000; }
				.a { width: 46px; flex: none; padding-left: 17px; box-sizing: border-box; }
				.a i { display: ${arrow ? 'block' : 'none'}; width: 0; border-style: solid; border-width: 8px 0 8px 8px; border-color: transparent transparent transparent #555; }
				.c { width: 28px; height: 28px; box-sizing: border-box; border: 3px solid #bbb; background: #fff; flex: none; margin-right: 12px; }
				.c svg { display: block; }
				.s { margin-right: 12px; flex: none; }
			</style>
			<div class="a"><i></i></div>
			<div class="c"><svg width="22" height="22" viewBox="0 0 22 22"><path d="M5 11l5 8 6-16" fill="none" stroke="#111" stroke-width="3.4"/></svg></div>
			${sym ? `<div class="s">${iconSvg(sym, 32)}</div>` : ''}
			<span><slot></slot></span>`;
	}
}

class AttrDialog extends HTMLElement {
	constructor() {
		super();
		this.attachShadow({ mode: 'open' }).innerHTML = `
			<style>
				:host { position: absolute; left: 464px; top: 1057px; width: 953px; height: 419px; display: flex; flex-direction: column;
					border-radius: 14px; overflow: hidden; background: #ececec;
					font-family: Inter, "Noto Sans CJK SC", sans-serif; }
				.tb { position: relative; height: 38px; flex: none; background: #f5f2f1; border-bottom: 1px solid #c8c6c6; display: flex; align-items: center; justify-content: center; font-size: 22px; color: #4a4a4a; }
				.lights { position: absolute; left: 10px; top: 10px; display: flex; gap: 12px; }
				.lights i { width: 18px; height: 18px; border-radius: 50%; }
				.form { display: flex; align-items: center; height: 47px; margin: 36px 0 0 35px; }
				.form label { width: 54px; font-size: 25px; color: #2a2a2a; }
				.edit { width: 798px; height: 47px; box-sizing: border-box; display: flex; align-items: center; background: #fff;
					border: 2px solid #8aa5c4; border-radius: 4px; box-shadow: inset 0 2px 0 #dcdde0; padding: 0 12px 0 4px; font-size: 26px; color: #000; }
				.edit span { flex: 1; }
				.foot { margin-top: auto; display: flex; justify-content: flex-end; gap: 13px; padding: 0 19px 18px 0; }
				button { width: 159px; height: 48px; border: 2px solid #a8a8a8; border-radius: 4px; background: linear-gradient(#fff, #ededed); font: 26px Inter, sans-serif; color: #111; padding: 0; }
				button.ok { border-color: #5a9ee8; background: linear-gradient(#fcfcfc, #e2e7ee); }
			</style>
			<div class="tb">
				<div class="lights"><i style="background:#ee6a5e"></i><i style="background:#f5bd4f"></i><i style="background:#61c454"></i></div>
				polygon - 要素属性
			</div>
			<div class="form">
				<label>id</label>
				<div class="edit"><span>001</span>
					<svg width="27" height="21" viewBox="0 0 27 21"><path d="M8 1h18v19H8L1 10.5z" fill="#999"/><path d="M12 6l9 9M21 6l-9 9" stroke="#fff" stroke-width="2.4"/></svg>
				</div>
			</div>
			<div class="foot"><button>Cancel</button><button class="ok">OK</button></div>`;
	}
}

// The floor plan. Drawn in its own rotated frame: u along the top wall, v along the left wall.
function floorPlan() {
	let s = '';
	const L = (a, b, c, d, w = .9) => `<path d="M${a} ${b}L${c} ${d}" stroke-width="${w}"/>`;
	const R = (u, v, w, h, extra = 'stroke-width=".9"') => `<rect x="${u}" y="${v}" width="${w}" height="${h}" ${extra}/>`;
	const X = (u, v, w, h) => R(u, v, w, h, 'stroke-width=".7"') + L(u, v, u + w, v + h, .5) + L(u + w, v, u, v + h, .5);
	const pillar = (u, v, w, h) => R(u, v, w, h, 'fill="#878e7c" stroke-width="1.2"');
	const plant = (u, v, r = 14) => {
		let p = '';
		for (let i = 0; i < 7; i++) {
			const t = i * Math.PI * 2 / 7 + .3 + u % 3, ex = u + Math.cos(t) * r, ey = v + Math.sin(t) * r;
			p += `M${u} ${v}L${ex.toFixed(1)} ${ey.toFixed(1)}`;
			for (const k of [.5, .75, 1]) {
				const mx = u + Math.cos(t) * r * k, my = v + Math.sin(t) * r * k, n = 3.2;
				p += `M${(mx - Math.sin(t) * n - Math.cos(t) * 2).toFixed(1)} ${(my + Math.cos(t) * n - Math.sin(t) * 2).toFixed(1)}L${mx.toFixed(1)} ${my.toFixed(1)}L${(mx + Math.sin(t) * n - Math.cos(t) * 2).toFixed(1)} ${(my - Math.cos(t) * n - Math.sin(t) * 2).toFixed(1)}`;
			}
		}
		return `<path d="${p}" stroke="#1c241a" stroke-width="1"/>`;
	};
	const chair = (u, v, d) => `<rect x="${u - 11}" y="${v - 10}" width="22" height="20" rx="7" stroke-width=".9"/><path d="M${u - 10} ${v + d * 4}Q${u} ${v + d * 11} ${u + 10} ${v + d * 4}" stroke-width=".7"/>`;
	const cluster = (u0, vc) => {
		let c = R(u0, vc - 25.5, 163, 51);
		c += L(u0, vc, u0 + 163, vc, 2.4);
		for (const k of [0, 54, 108, 162]) c += `<circle cx="${u0 + k}" cy="${vc}" r="3" stroke-width="1"/>`;
		for (const k of [52, 106]) c += L(u0 + k, vc - 25.5, u0 + k, vc + 25.5, .8);
		for (const k of [3, 57, 111]) c += X(u0 + k, vc - 24, 19, 17) + X(u0 + k, vc + 7, 19, 17);
		for (const k of [26, 81, 136]) c += chair(u0 + k, vc - 38, -1) + chair(u0 + k, vc + 38, 1);
		return c;
	};
	const dim = (a, b, c, d, t) => {
		const mx = (a + c) / 2, my = (b + d) / 2;
		const vertical = Math.abs(d - b) > Math.abs(c - a);
		const r = vertical ? 90 : 180;
		return L(a, b, c, d, .6) + `<circle cx="${a}" cy="${b}" r="1.5" fill="#23281f"/><circle cx="${c}" cy="${d}" r="1.5" fill="#23281f"/>` +
			`<text transform="translate(${mx + (vertical ? 10 : 0)} ${my + (vertical ? 0 : -3)}) rotate(${r})" font-size="11" fill="#474d3f" stroke="none" text-anchor="middle" font-family="Liberation Sans">${t}</text>`;
	};
	const note = (u, v, t) => `<text transform="translate(${u} ${v}) rotate(180)" font-size="13" fill="#474d3f" stroke="none" text-anchor="middle" font-family="'Noto Sans CJK SC', sans-serif">${t}</text>`;

	// outer walls, inner skin
	s += L(386, 8, 856, 8, 1) + L(386, 13, 856, 13, 1) + L(8, 343, 8, 636, 1);
	s += L(8, 634, 640, 634, 1) + L(8, 640, 640, 640, 1);
	s += L(881, 40, 881, 305, 1) + L(877, 40, 877, 305, 1);
	s += R(676, 6, 8, 20, 'fill="#cedac0" stroke-width=".9"') + R(759, 6, 8, 20, 'fill="#cedac0" stroke-width=".9"');

	// upper left blank room
	s += L(0, 328, 363, 328, 1) + L(363, 328, 363, 22, 1);
	s += L(8, 343, 378, 343, 1) + L(378, 343, 378, 22, 1);

	// shaft and kitchen counter
	s += L(10, 343, 173, 444, .7) + L(8, 442, 173, 343, .7);
	s += L(10, 443, 173, 443, .9) + L(10, 447, 173, 447, .6);
	s += R(175, 343, 20, 108, 'stroke-width=".8"');
	for (const v of [385, 405, 425]) s += L(175, v, 195, v + 18, .5) + L(195, v, 175, v + 18, .5);
	s += R(181, 361, 9, 16, 'fill="#555" stroke-width=".8"');
	s += X(203, 345, 29, 25);
	s += R(245, 343, 106, 36) + L(283, 343, 283, 379) + L(318, 343, 318, 379);
	s += `<path d="M252 350h22v22h-22zM322 350h22v22h-22zM256 366q8-14 16 0M326 366q8-14 16 0" stroke-width=".7"/>`;

	// coffee corner
	s += `<circle cx="288.6" cy="407" r="13" stroke-width=".9"/><circle cx="307.7" cy="412" r="18" stroke-width="1.8" fill="#cedac0"/>`;
	s += plant(307, 412, 6);
	s += `<path d="M345 395c18-8 34 4 32 20-2 14-18 20-30 12-12-8-14-26-2-32z" stroke-width="1"/><path d="M372 398c-4 14-10 24-24 30M377 410l-8-2M372 422l-7-5M362 430l-3-8" stroke-width=".7"/>`;
	s += `<circle cx="367" cy="361" r="10" stroke-width=".8"/><circle cx="367" cy="361" r="5" stroke-width=".7"/>`;

	// corridor walls
	s += L(119, 514, 374, 514) + L(119, 520, 367, 520) + L(119, 514, 119, 520);
	s += L(374, 514, 374, 634) + L(367, 520, 367, 634);
	s += L(122, 548, 122, 634) + L(127, 548, 127, 634) + L(122, 548, 127, 548);
	s += `<path d="M127 543a32 32 0 0 0 30-22" stroke-width=".6" stroke-dasharray="3 1.6"/>`;

	// entrance doors, lower left
	s += L(35, 604, 35, 636, 1.2) + L(112, 604, 112, 636, 1.2) + L(35, 636, 112, 636, .8);
	s += `<path d="M35 604a38 38 0 0 1 39 34M112 604a38 38 0 0 0-38 34" stroke-width=".6" stroke-dasharray="3 1.6"/>`;
	s += R(14, 622, 12, 12) + R(116, 622, 10, 12);

	// room dimensions
	s += L(8, 511, 60, 511, .8) + L(8, 515, 60, 515, .8) + L(60, 511, 60, 515, .8);
	s += dim(8, 497, 62, 497, '1270') + dim(62, 497, 121, 497, '1300');
	s += dim(168, 446, 168, 513, '1800');
	s += dim(123, 540, 372, 540, '6190');
	s += dim(312, 514, 312, 636, '3230');
	s += dim(232, 372, 232, 447, '2000');
	s += note(235, 535, '会议');

	// dining room
	s += L(404, 514, 616, 514) + L(404, 518, 616, 518);
	s += `<path d="M374 540a32 32 0 0 0 30-24" stroke-width=".6" stroke-dasharray="3 1.6"/>`;
	s += dim(405, 525, 405, 636, '3230');
	s += dim(534, 538, 630, 538, '2200');
	s += note(422, 534, '会议室');
	s += `<path d="M440 578l15-16h67l15 16-15 16h-67z" stroke-width="1.1"/><path d="M445 578l12-13h63l12 13-12 13h-63z" stroke-width=".7"/>`;
	for (const u of [465, 511]) for (let i = 1; i <= 3; i++) s += `<path d="M${u} ${578 - i * 4}L${u + i * 6} 578 ${u} ${578 + i * 4} ${u - i * 6} 578z" stroke-width=".5"/>`;
	s += `<circle cx="488" cy="578" r="4.5" fill="#23281f" opacity=".8"/>`;
	for (const [u, v] of [[456, 545], [488, 542], [520, 545], [457, 608], [490, 611], [520, 608], [429, 579], [549, 577]]) s += R(u - 10, v - 10, 20, 20, 'rx="2" stroke-width=".8"');

	// lounge
	s += L(535, 402, 535, 510) + L(539, 402, 539, 510);
	s += R(540, 484, 57, 26, 'rx="3" stroke-width=".9"') + L(568, 484, 568, 510) + L(544, 506, 593, 506, .7);
	s += R(601, 485, 24, 22) + `<circle cx="613" cy="496" r="7" stroke-width=".7"/><path d="M606 496h14M613 489v14" stroke-width=".6"/>`;
	s += R(598, 397, 28, 81, 'rx="3" stroke-width=".9"') + L(604, 424, 626, 424) + L(604, 451, 626, 451) + L(604, 397, 604, 478, .7);
	s += R(555, 416, 26, 44) + R(558, 420, 20, 36, 'stroke-width=".6"');
	s += `<path d="M562 430l12 16M574 430l-12 16M568 426v20" stroke-width=".6"/>`;
	s += `<path d="M541 372a28 28 0 0 1-4 30" stroke-width=".6" stroke-dasharray="3 1.6"/>`;
	s += note(555, 392, '接待');
	s += X(581, 339, 46, 32);
	s += dim(540, 467, 632, 467, '2300');

	// wall between the two wings
	s += L(627, 340, 627, 645) + L(631, 340, 631, 645, .8) + L(636, 340, 636, 645);

	// office wing wall and doors
	s += L(580, 327, 682, 327, 1.6) + L(580, 338, 682, 338, 1);
	s += L(682, 333, 783, 333, .8) + L(682, 338, 783, 338, .8);
	s += L(783, 327, 859, 327, 1) + L(783, 338, 859, 338, 1);
	s += L(680, 282, 680, 333, 1) + L(684, 282, 684, 333, 1) + L(780, 284, 780, 333, 1) + L(784, 284, 784, 333, 1);
	s += `<path d="M684 282a50 50 0 0 1 48 52M780 284a50 50 0 0 0-48 50" stroke-width=".6" stroke-dasharray="3 1.6"/>`;

	// desks
	s += cluster(375, 93) + cluster(375, 200) + cluster(616, 93) + cluster(616, 201);

	// office dimensions
	s += dim(600, 12, 600, 324, '1590');
	s += dim(537, 106, 600, 106, '2000');
	s += dim(779, 188, 856, 188, '2100');
	s += note(524, 263, '办公区');

	// planter along the right wall
	for (let v = 46; v <= 300; v += 11) s += plant(866 + (v % 22 ? 2 : -2), v, 10) + plant(868 - (v % 22 ? 3 : -3), v + 5, 8);
	s += L(856, 38, 856, 305, .8);

	for (const [u, v] of [[21, 525], [388, 324], [565, 315], [847, 23], [617, 381], [844, 312], [618, 525], [613, 625]]) s += plant(u, v, 15);

	// columns go over the lines
	s += pillar(364, 0, 22, 22) + pillar(548, 3, 38, 30) + pillar(856, 3, 32, 34) + pillar(536, 327, 44, 44);
	s += pillar(859, 305, 27, 31) + pillar(214, 616, 44, 29) + pillar(540, 618, 44, 28);
	return s;
}

class MapCanvas extends HTMLElement {
	constructor() {
		super();
		this.attachShadow({ mode: 'open' }).innerHTML = `
			<style>
				:host { display: block; position: relative; width: 2182px; height: 1570px; background: #f2dada; overflow: hidden; }
				svg { display: block; }
				.mark { position: absolute; right: 10px; bottom: 8px; font: 12px "Liberation Sans", sans-serif; color: #a9a0a0; }
				.shadow { position: absolute; left: 464px; top: 1057px; width: 953px; height: 419px; border-radius: 14px; box-shadow: 0 20px 34px rgba(90, 50, 50, .3), 0 0 4px rgba(60, 30, 30, .45); }
			</style>
			<svg width="2182" height="1570" viewBox="523 248 2182 1570">
				<defs>
					<filter id="b" x="-10%" y="-10%" width="120%" height="120%"><feGaussianBlur stdDeviation="3.5"/></filter>
					<filter id="b2" x="-10%" y="-10%" width="120%" height="120%"><feGaussianBlur stdDeviation="3.2"/></filter>
				</defs>
				<polygon points="523,248 968,248 2001,643 1939,763 1670,1400 1420,1370 523,1020" fill="#d9d1cc"/>
				<g fill="none" stroke="#b8ada4" stroke-width="5" filter="url(#b2)" stroke-dasharray="13 8" opacity=".8">
					<path d="M968 248L2001 643L1945 755"/>
					<path d="M523 1020L1420 1370"/>
				</g>
				<path d="M1947 770L1700 1310" stroke="#c9b3b1" stroke-width="5" fill="none" filter="url(#b)" opacity=".65"/>
				<path d="M1942 768L1806 1068" stroke="#e76f8a" stroke-width="2.4" fill="none"/>
				<g transform="matrix(.91 .4145 -.4145 .91 1130 394)" fill="none" stroke="#2b3127">
					<rect width="888" height="646" fill="#cedac0" stroke="none"/>
					${floorPlan()}
					<rect width="888" height="646" stroke="#000" stroke-width="3.6"/>
				</g>
				<polygon points="780,553.6 1069,536 910,820 667,722" fill="#f03030" fill-opacity=".16" stroke="#f52b2b" stroke-width="2.6"/>
			</svg>
			<div class="shadow"></div>
			<slot></slot>
			<div class="mark">CSDN @tsuyoi</div>`;
	}
}

class QgisApp extends HTMLElement {
	constructor() {
		super();
		const B = (i, a = '') => `<tool-btn icon="${i}" ${a}></tool-btn>`;
		const G = '<tool-grip></tool-grip>', D = '<tool-drop></tool-drop>', S = '<tool-sep></tool-sep>';
		const M = (t, bg, fg) => `<mode-btn style="--bg:${bg};--fg:${fg}">${t}</mode-btn>`;
		const T = (icon, label, arrow = '', indent = 0) => `<tree-row icon="${icon}" ${arrow ? `arrow="${arrow}"` : ''} indent="${indent}">${label}</tree-row>`;
		this.attachShadow({ mode: 'open' }).innerHTML = `
			<style>
				:host { display: flex; flex-direction: column; width: 2710px; height: 1818px; background: #ececec; }
				.main { display: flex; flex: 1; min-height: 0; }
				.dock { display: flex; flex-direction: column; width: 510px; height: 100%; flex: none; }
				.split { height: 8px; flex: none; display: flex; justify-content: center; padding-left: 8px; box-sizing: border-box; align-items: center; }
				.split i { width: 36px; height: 3px; background: radial-gradient(circle at 1.5px 1.5px, #f8f8f8 1.5px, transparent 1.8px) 0 0 / 6px 3px; }
				.vsplit { width: 13px; flex: none; display: flex; align-items: center; justify-content: center; padding-top: 34px; box-sizing: border-box; }
				.vsplit i { width: 3px; height: 34px; background: radial-gradient(circle at 1.5px 1.5px, #d4d4d4 1.3px, transparent 1.6px) 0 0 / 3px 7px; }
				.right { display: flex; flex-direction: column; padding-top: 3px; }
				.edge { flex: none; width: 5px; background: #ececec; }
				.hs { height: 4px; flex: none; background: linear-gradient(90deg, #f4f4f4 340px, #d4d4d4 340px, #d4d4d4 480px, #f4f4f4 480px); border-top: 2px solid #bbb; }
			</style>
			<top-band></top-band>
			<tool-bar>
				<tool-grip first></tool-grip>
				${B('new')}${B('open')}${B('save')}${B('newprint')}${B('layout')}${B('style')}${G}
				${B('hand')}${B('panto')}${B('zoomin')}${B('zoomout')}${B('zoomfull')}${B('zoomsel')}${B('zoomlayer')}
				${B('zoom11', 'off')}${B('zoomlast')}${B('zoomnext', 'off')}${B('newmap')}${B('new3d')}${B('newbm')}${B('showbm')}${B('clock')}${B('refresh')}${G}
				${B('select')}${D}${B('selval')}${D}${B('desel')}${D}${B('selloc')}${G}
				${B('identify')}${B('abacus')}${B('gear', 'active')}${B('sigma')}${B('table')}${D}${B('measure')}${D}${B('tip', 'active')}${B('action')}${D}
			</tool-bar>
			<tool-bar>
				<tool-grip first></tool-grip>
				${B('dsm')}${B('gpkg')}${B('vnew')}${B('feather')}${B('chip')}${B('mesh')}${B('vbox')}${G}
				${B('pencils')}${B('pencil', 'active')}${B('saveedit', 'off')}${B('polyadd', 'active')}${B('vertex')}${D}
				${B('multi', 'off')}${B('trash', 'off')}${B('cut', 'off')}${B('copy', 'off')}${B('paste')}${B('undo', 'off')}${B('redo', 'off')}${G}
				${B('abc')}${B('pie')}${S}${B('abpin')}${B('abcred')}${S}
				${B('abpingrey', 'off')}${B('abceye', 'off')}${B('abcmove', 'off')}${B('abcrot', 'off')}${B('abcfea', 'off')}${G}
				${B('globebin')}${G}${B('python')}${G}${B('help')}${G}
			</tool-bar>
			<tool-bar>
				<tool-grip first></tool-grip>
				${M('AD', '#ffb8c8', '#ff2a3c')}${M('MO', '#e6ebe6', '#d6dcd6')}${M('RO', '#b8b0ba', '#cfc8cc')}
				<spin-box>0.000</spin-box>
				${M('SC', '#d8dbc6', '#c2cbb6')}${M('ADJ', '#c0bab8', '#dcd8d6')}${M('2P', '#d2dad6', '#d9d0d0')}${M('T-', '#f2f2f2', '#c2c2c2')}${M('T+', '#9c9c9c', '#dadada')}${M('!!', '#d6ded0', '#c4ccba')}
				<div style="width:66px;display:flex;justify-content:center;margin-top:3px"><div style="width:48px;height:48px;background:#b4b8c4;display:block">${iconSvg('back', 48)}</div></div>
			</tool-bar>
			<div class="main">
				<div class="dock">
					<dock-panel heading="浏览器 (2)" style="height:948px">
						<tool-btn slot="bar" small icon="addnew"></tool-btn><tool-btn slot="bar" small icon="refreshs"></tool-btn><tool-btn slot="bar" small icon="filter"></tool-btn><tool-btn slot="bar" small icon="collapse"></tool-btn><tool-btn slot="bar" small icon="info"></tool-btn>
						<tree-view>
							${T('folderfav', 'Applications', 'right')}${T('folderfav', 'Desktop')}${T('folderfav', 'Documents')}${T('folderfav', 'Downloads')}${T('folderfav', 'key')}
							${T('folder', 'Movies', 'right')}${T('folder', 'Music', 'right')}${T('folder', 'node_modules', 'right')}${T('folderfav', 'office', 'down')}
							${T('geo', '1.geojson', '', 32)}${T('geo', 'office.geojson', '', 32)}
							${T('folder', 'Pictures', 'right')}${T('folder', 'Postman', 'right')}${T('folder', 'Public', 'right')}${T('folder', 'Sunlogin Files', 'right')}${T('folder', 'temp', 'right')}
							${T('folderfav', '未命名文件夹')}${T('geo', '1122.geojson')}${T('zip', 'key.zip')}${T('geo', 'office_temp.geojson')}
							${T('db', 'package-lock.json', 'right')}${T('db', 'package.json', 'right')}${T('qgis', 'qgis', 'right')}${T('sshzip', 'ssh.zip', 'right')}
						</tree-view>
						<v-scroll></v-scroll>
					</dock-panel>
					<div class="split"><i></i></div>
					<dock-panel heading="图层" style="flex:1;--title-h:47px;--bar-h:59px;--bar-pb:9px;min-height:0">
						<tool-btn slot="bar" small icon="brush"></tool-btn><tool-btn slot="bar" small icon="addgroup"></tool-btn><tool-btn slot="bar" small icon="eye"></tool-btn><tool-btn slot="bar" small icon="filterd"></tool-btn><tool-btn slot="bar" small icon="epsilon"></tool-btn><tool-drop slot="bar"></tool-drop><tool-btn slot="bar" small icon="expand"></tool-btn><tool-btn slot="bar" small icon="collapse"></tool-btn><tool-btn slot="bar" small icon="remove"></tool-btn>
						<tree-view>
							<layer-row symbol="linesym" style="--h:35px">1</layer-row>
							<layer-row symbol="editsym" current style="--h:36px">polygon</layer-row>
							<layer-row style="--h:34px">WeChat4144e558cd70972a3b1b6d</layer-row>
							<layer-row symbol="zip" arrow style="--h:34px">OpenStreetMap</layer-row>
						</tree-view>
					</dock-panel>
					<div class="hs"></div>
				</div>
				<div class="vsplit"><i></i></div>
				<div class="right">
					<map-canvas><attr-dialog></attr-dialog></map-canvas>
				</div>
				<div class="edge"></div>
			</div>`;
	}
}

customElements.define('top-band', TopBand);
customElements.define('tool-bar', ToolBar);
customElements.define('tool-grip', ToolGrip);
customElements.define('tool-sep', ToolSep);
customElements.define('tool-drop', ToolDrop);
customElements.define('tool-btn', ToolBtn);
customElements.define('mode-btn', ModeBtn);
customElements.define('spin-box', SpinBox);
customElements.define('dock-panel', DockPanel);
customElements.define('tree-view', TreeView);
customElements.define('tree-row', TreeRow);
customElements.define('v-scroll', VScroll);
customElements.define('layer-row', LayerRow);
customElements.define('attr-dialog', AttrDialog);
customElements.define('map-canvas', MapCanvas);
customElements.define('qgis-app', QgisApp);
</script>
</body>
</html>
